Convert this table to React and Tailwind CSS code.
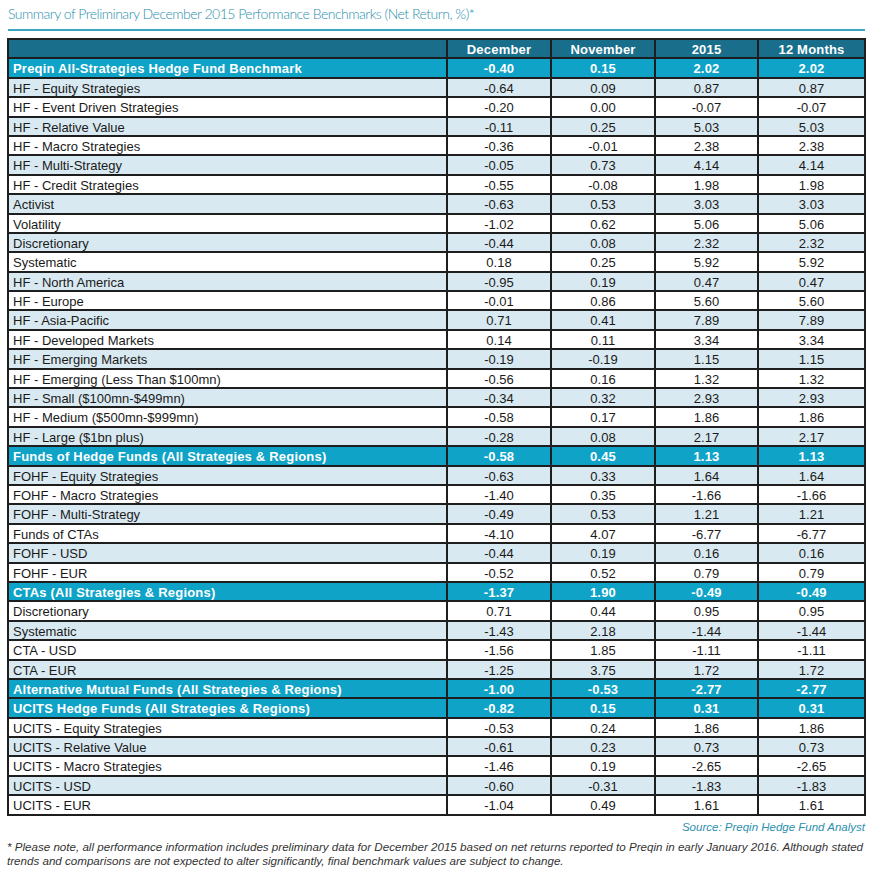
const rows = [
  ['Preqin All-Strategies Hedge Fund Benchmark', '-0.40', '0.15', '2.02', '2.02', true],
  ['HF - Equity Strategies', '-0.64', '0.09', '0.87', '0.87'],
  ['HF - Event Driven Strategies', '-0.20', '0.00', '-0.07', '-0.07'],
  ['HF - Relative Value', '-0.11', '0.25', '5.03', '5.03'],
  ['HF - Macro Strategies', '-0.36', '-0.01', '2.38', '2.38'],
  ['HF - Multi-Strategy', '-0.05', '0.73', '4.14', '4.14'],
  ['HF - Credit Strategies', '-0.55', '-0.08', '1.98', '1.98'],
  ['Activist', '-0.63', '0.53', '3.03', '3.03'],
  ['Volatility', '-1.02', '0.62', '5.06', '5.06'],
  ['Discretionary', '-0.44', '0.08', '2.32', '2.32'],
  ['Systematic', '0.18', '0.25', '5.92', '5.92'],
  ['HF - North America', '-0.95', '0.19', '0.47', '0.47'],
  ['HF - Europe', '-0.01', '0.86', '5.60', '5.60'],
  ['HF - Asia-Pacific', '0.71', '0.41', '7.89', '7.89'],
  ['HF - Developed Markets', '0.14', '0.11', '3.34', '3.34'],
  ['HF - Emerging Markets', '-0.19', '-0.19', '1.15', '1.15'],
  ['HF - Emerging (Less Than $100mn)', '-0.56', '0.16', '1.32', '1.32'],
  ['HF - Small ($100mn-$499mn)', '-0.34', '0.32', '2.93', '2.93'],
  ['HF - Medium ($500mn-$999mn)', '-0.58', '0.17', '1.86', '1.86'],
  ['HF - Large ($1bn plus)', '-0.28', '0.08', '2.17', '2.17'],
  ['Funds of Hedge Funds (All Strategies & Regions)', '-0.58', '0.45', '1.13', '1.13', true],
  ['FOHF - Equity Strategies', '-0.63', '0.33', '1.64', '1.64'],
  ['FOHF - Macro Strategies', '-1.40', '0.35', '-1.66', '-1.66'],
  ['FOHF - Multi-Strategy', '-0.49', '0.53', '1.21', '1.21'],
  ['Funds of CTAs', '-4.10', '4.07', '-6.77', '-6.77'],
  ['FOHF - USD', '-0.44', '0.19', '0.16', '0.16'],
  ['FOHF - EUR', '-0.52', '0.52', '0.79', '0.79'],
  ['CTAs (All Strategies & Regions)', '-1.37', '1.90', '-0.49', '-0.49', true],
  ['Discretionary', '0.71', '0.44', '0.95', '0.95'],
  ['Systematic', '-1.43', '2.18', '-1.44', '-1.44'],
  ['CTA - USD', '-1.56', '1.85', '-1.11', '-1.11'],
  ['CTA - EUR', '-1.25', '3.75', '1.72', '1.72'],
  ['Alternative Mutual Funds (All Strategies & Regions)', '-1.00', '-0.53', '-2.77', '-2.77', true],
  ['UCITS Hedge Funds (All Strategies & Regions)', '-0.82', '0.15', '0.31', '0.31', true],
  ['UCITS - Equity Strategies', '-0.53', '0.24', '1.86', '1.86'],
  ['UCITS - Relative Value', '-0.61', '0.23', '0.73', '0.73'],
  ['UCITS - Macro Strategies', '-1.46', '0.19', '-2.65', '-2.65'],
  ['UCITS - USD', '-0.60', '-0.31', '-1.83', '-1.83'],
  ['UCITS - EUR', '-1.04', '0.49', '1.61', '1.61'],
]

const gridCols = 'grid grid-cols-[437px_104px_104px_103px_107px]'

export default function App() {
  return (
    <div className="w-[869px] h-[874px] bg-white pt-[5px] pl-[7px]" style={{ fontFamily: '"Liberation Sans", Arial, sans-serif' }}>
      <h1 className="text-[14px] leading-[18px] text-[#2b8fae] pl-[1px] font-light tracking-[-0.5px]" style={{ fontFamily: 'Lato, sans-serif' }}>
        Summary of Preliminary December 2015 Performance Benchmarks (Net Return, %)*
      </h1>
      <div className="mt-[6px] ml-[1px] w-[857px] h-[2px] bg-[#3ba6c2]" />

      <div className="mt-[7px] w-[859px] border-2 border-[#1e1e1e] text-[13px] text-[#1a1a1a]">
        <div className={`${gridCols} h-[19.4px] border-b-2 border-[#1e1e1e] bg-[#196f8b] text-white font-bold tracking-[0.2px] items-center`}>
          <div />
          {['December', 'November', '2015', '12 Months'].map((h) => (
            <div key={h} className="h-full border-l-2 border-[#1e1e1e] flex items-center justify-center">{h}</div>
          ))}
        </div>
        {rows.map((r, i) => {
          const section = r[5]
          const last = i === rows.length - 1
          const bg = section ? 'bg-[#0ea3c7] text-white font-bold tracking-[0.2px]' : i % 2 === 1 ? 'bg-[#d9e9f1]' : 'bg-white'
          return (
            <div
              key={i}
              className={`${gridCols} ${last ? 'h-[17.4px]' : 'h-[19.4px] border-b-2 border-[#1e1e1e]'} ${bg}`}
            >
              <div className="pl-[4px] flex items-center whitespace-nowrap">{r[0]}</div>
              {r.slice(1, 5).map((v, j) => (
                <div key={j} className="border-l-2 border-[#1e1e1e] flex items-center justify-center">{v}</div>
              ))}
            </div>
          )
        })}
      </div>

      <p className="w-[859px] text-right text-[11.5px] italic text-[#2b8fae] mt-[3px] leading-[16px] pr-[1px]">
        Source: Preqin Hedge Fund Analyst
      </p>
      <p className="w-[860px] mt-[5px] text-[11.6px] italic leading-[14px] text-[#333]">
        * Please note, all performance information includes preliminary data for December 2015 based on net returns reported to Preqin in early January 2016. Although stated trends and comparisons are not expected to alter significantly, final benchmark values are subject to change.
      </p>
    </div>
  )
}
